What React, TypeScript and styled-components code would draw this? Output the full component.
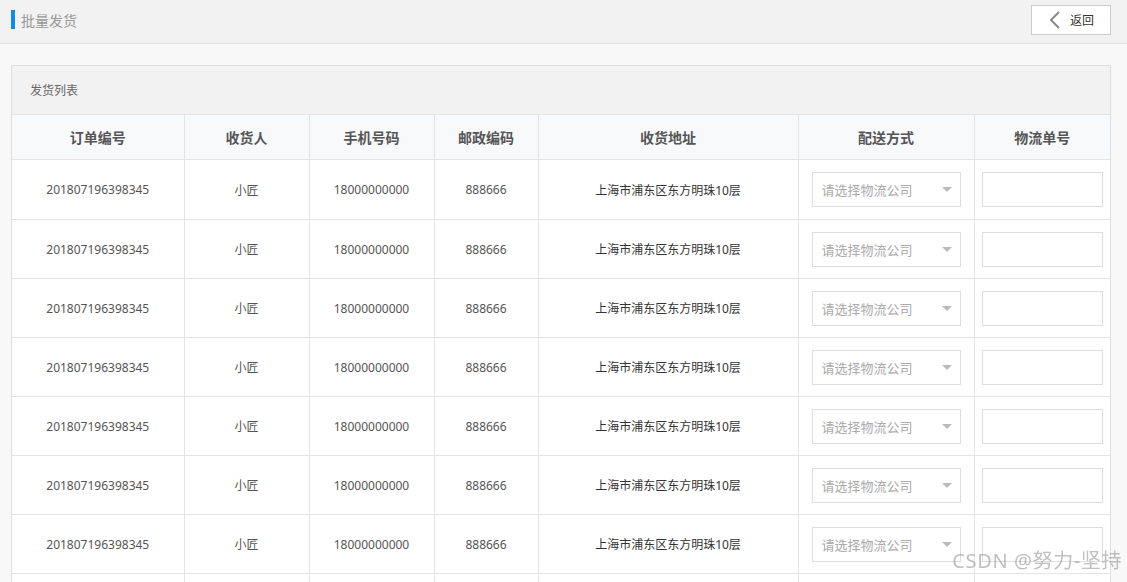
import React from "react";
import styled, { createGlobalStyle } from "styled-components";

const GlobalStyle = createGlobalStyle`
  html, body {
    margin: 0;
    padding: 0;
    overflow: hidden;
    background: #f8f8f8;
    font-family: "Noto Sans", "Noto Sans CJK SC", sans-serif;
  }
`;

type Order = {
  id: string,
  name: string,
  phone: string,
  zip: string,
  address: string
}

const orders: Order[] = Array.from({ length: 8 }, () => ({
  id: "201807196398345",
  name: "小匠",
  phone: "18000000000",
  zip: "888666",
  address: "上海市浦东区东方明珠10层",
}));

const columns = [
  { title: "订单编号", width: 172 },
  { title: "收货人", width: 125 },
  { title: "手机号码", width: 125 },
  { title: "邮政编码", width: 104 },
  { title: "收货地址", width: 260 },
  { title: "配送方式", width: 176 },
  { title: "物流单号", width: 136 },
];

const Page = styled.div`
  height: 582px;
  overflow: hidden;
`;

const TopBar = styled.header`
  height: 44px;
  background: #f2f2f2;
  border-bottom: 1px solid #e2e2e2;
  display: flex;
  align-items: center;
  justify-content: space-between;
  padding: 0 16px 0 11px;
  box-sizing: border-box;
`;

const Title = styled.h1`
  margin: 0;
  display: flex;
  align-items: center;
  gap: 6px;
  font-size: 14px;
  font-weight: normal;
  color: #999;
  margin-top: -4px;

  &::before {
    content: "";
    width: 4px;
    height: 19px;
    background: #0a8cf0;
  }
`;

const BackButton = styled.button`
  width: 80px;
  height: 30px;
  margin-top: -4px;
  background: #fff;
  border: 1px solid #ccc;
  display: flex;
  align-items: center;
  gap: 9px;
  padding: 0 0 0 17px;
  font-family: inherit;
  font-size: 12px;
  color: #333;
  cursor: pointer;
`;

const Content = styled.main`
  padding: 21px 16px 0 11px;
`;

const Panel = styled.section`
  border: 1px solid #dedede;
  background: #fff;
`;

const PanelHead = styled.div`
  height: 48px;
  background: #f2f2f2;
  border-bottom: 1px solid #e4e4e4;
  display: flex;
  align-items: center;
  padding-left: 18px;
  font-size: 12px;
  color: #666;
`;

const Table = styled.table`
  width: 100%;
  border-collapse: collapse;
  table-layout: fixed;

  tbody tr:first-child td {
    height: 59px;
  }
`;

const Th = styled.th`
  height: 44px;
  background: #f8f9fb;
  border-right: 1px solid #e4e4e4;
  border-bottom: 1px solid #e4e4e4;
  font-size: 14px;
  font-weight: bold;
  color: #555;
  text-align: center;
  padding: 0;

  &:last-child {
    border-right: none;
  }
`;

const Td = styled.td<{ $dark?: boolean }>`
  height: 58px;
  border-right: 1px solid #e4e4e4;
  border-bottom: 1px solid #e4e4e4;
  font-size: 12px;
  color: ${(p) => (p.$dark ? "#333" : "#555")};
  text-align: center;
  padding: 0;

  &:last-child {
    border-right: none;
  }
`;

const SelectBox = styled.div`
  width: 149px;
  height: 35px;
  margin: 0 auto;
  border: 1px solid #ddd;
  box-sizing: border-box;
  display: flex;
  align-items: center;
  justify-content: space-between;
  padding: 0 8px 0 9px;
  font-size: 13px;
  color: #aaa;
  text-align: left;
`;

const Caret = styled.span`
  width: 0;
  height: 0;
  border-left: 5px solid transparent;
  border-right: 5px solid transparent;
  border-top: 5px solid #bbb;
`;

const TrackInput = styled.input`
  display: block;
  width: 121px;
  height: 35px;
  margin: 0 auto;
  border: 1px solid #ddd;
  box-sizing: border-box;
  outline: none;
`;

const Watermark = styled.div`
  position: fixed;
  right: 5px;
  top: 546px;
  font-size: 20px;
  line-height: 30px;
  color: rgba(130, 130, 130, 0.5);
  letter-spacing: 0.6px;
  pointer-events: none;
`;

function ChevronLeft() {
  return (
    <svg width="12" height="18" viewBox="0 0 12 18">
      <path d="M10 1 L2 9 L10 17" fill="none" stroke="#888" strokeWidth="2" />
    </svg>
  );
}

export default function App() {
  return (
    <Page>
      <GlobalStyle />
      <TopBar>
        <Title>批量发货</Title>
        <BackButton>
          <ChevronLeft />
          返回
        </BackButton>
      </TopBar>
      <Content>
        <Panel>
          <PanelHead>发货列表</PanelHead>
          <Table>
            <colgroup>
              {columns.map((c) => (
                <col key={c.title} style={{ width: c.width }} />
              ))}
            </colgroup>
            <thead>
              <tr>
                {columns.map((c) => (
                  <Th key={c.title}>{c.title}</Th>
                ))}
              </tr>
            </thead>
            <tbody>
              {orders.map((o, i) => (
                <tr key={i}>
                  <Td>{o.id}</Td>
                  <Td>{o.name}</Td>
                  <Td>{o.phone}</Td>
                  <Td>{o.zip}</Td>
                  <Td $dark>{o.address}</Td>
                  <Td>
                    <SelectBox>
                      请选择物流公司
                      <Caret />
                    </SelectBox>
                  </Td>
                  <Td>
                    <TrackInput type="text" />
                  </Td>
                </tr>
              ))}
            </tbody>
          </Table>
        </Panel>
      </Content>
      <Watermark>CSDN @努力-坚持</Watermark>
    </Page>
  );
}
